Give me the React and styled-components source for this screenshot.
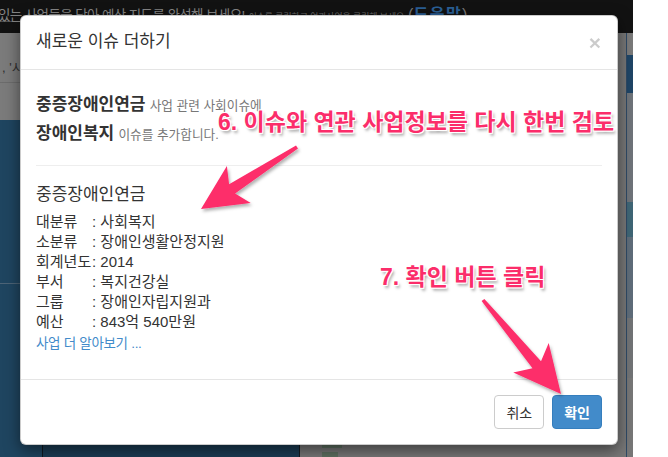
import React from 'react'
import styled, { createGlobalStyle } from 'styled-components'

const GlobalStyle = createGlobalStyle`
  html, body { margin: 0; padding: 0; background: #fff; }
  body { font-family: "Liberation Sans", "Noto Sans CJK KR", sans-serif; }
`

const detail = [
  ['대분류', '사회복지'],
  ['소분류', '장애인생활안정지원'],
  ['회계년도', '2014'],
  ['부서', '복지건강실'],
  ['그룹', '장애인자립지원과'],
  ['예산', '843억 540만원'],
]

// arrow polygon: tapered shaft + swept back head
function arrowPoints(tail, tip, headLen, sweep, headHalf, neckHalf, tailHalf) {
  const dx = tip[0] - tail[0]
  const dy = tip[1] - tail[1]
  const len = Math.hypot(dx, dy)
  const ux = dx / len
  const uy = dy / len
  const px = -uy
  const py = ux
  const neck = [tip[0] - ux * headLen, tip[1] - uy * headLen]
  const base = [tip[0] - ux * (headLen + sweep), tip[1] - uy * (headLen + sweep)]
  const pts = [
    [tail[0] + px * tailHalf, tail[1] + py * tailHalf],
    [neck[0] + px * neckHalf, neck[1] + py * neckHalf],
    [base[0] + px * headHalf, base[1] + py * headHalf],
    tip,
    [base[0] - px * headHalf, base[1] - py * headHalf],
    [neck[0] - px * neckHalf, neck[1] - py * neckHalf],
    [tail[0] - px * tailHalf, tail[1] - py * tailHalf],
  ]
  return pts.map(p => p[0].toFixed(1) + ',' + p[1].toFixed(1)).join(' ')
}

function App() {
  return (
    <>
      <GlobalStyle />
      <Page>
        <TopBar>
          <Lead>있는 사업들을 담아 예산 지도를 완성해 보세요!</Lead>
          <Hint>이슈를 클릭하고 연관사업을 클릭해 보세요</Hint>
          <Help>(<b>도움말</b>)</Help>
        </TopBar>
        <Main>
          <LeftCol>
            <LeftHead>
              <HeadRow>, '시민 참여', '복지'</HeadRow>
            </LeftHead>
            <LeftBody>
              <Sidebar>
                <SideBlock />
              </Sidebar>
            </LeftBody>
          </LeftCol>
          <RightCol>
            <RightContent>
              <Tag $w={20} />
              <Tag $w={16} />
            </RightContent>
            <Strip>
              <StripBlock $h={22} $bg="#7a7a7a" />
              <StripBlock $h={38} $bg="#1f4566" />
              <StripBlock $h={109} $bg="#6f747a" />
              <StripBlock $h={35} $bg="#3f6676" />
              <StripBlock $h={81} $bg="#5f6d7a" />
              <StripBlock $h={60} $bg="#727476" />
            </Strip>
          </RightCol>
        </Main>

        <Modal>
          <Header>
            <Title>새로운 이슈 더하기</Title>
            <Close>×</Close>
          </Header>
          <Body>
            <Intro>
              <Strong>중증장애인연금</Strong> <Small>사업 관련 사회이슈에</Small>
              <br />
              <Strong>장애인복지</Strong> <Small>이슈를 추가합니다.</Small>
            </Intro>
            <Rule />
            <SectionTitle>중증장애인연금</SectionTitle>
            {detail.map(([k, v]) => (
              <Row key={k}>
                <Label>{k}</Label>: {v}
              </Row>
            ))}
            <More href="#">사업 더 알아보기 ...</More>
          </Body>
          <Footer>
            <Button>취소</Button>
            <Button $primary>확인</Button>
          </Footer>
        </Modal>

        <Arrows width="633" height="457" viewBox="0 0 633 457">
          <defs>
            <filter id="sh" x="-20%" y="-20%" width="140%" height="140%">
              <feDropShadow dx="1.5" dy="2.5" stdDeviation="1.5" floodColor="#000" floodOpacity="0.3" />
            </filter>
          </defs>
          <polygon
            filter="url(#sh)"
            fill="#fd2d6b"
            points={arrowPoints([297, 147], [201, 209], 37, 8, 22, 5.5, 1.8)}
          />
          <polygon
            filter="url(#sh)"
            fill="#fd2d6b"
            points={arrowPoints([483, 300], [561, 394], 38, 9, 23, 5.5, 1.8)}
          />
        </Arrows>

        <Note $x={218} $y={107}>6. 이슈와 연관 사업정보를 다시 한번 검토</Note>
        <Note $x={380} $y={262}>7. 확인 버튼 클릭</Note>
      </Page>
    </>
  )
}

const Page = styled.div`
  position: relative;
  width: 633px;
  height: 457px;
  overflow: hidden;
  background: #787878;
  display: flex;
  flex-direction: column;
`

const TopBar = styled.div`
  height: 33px;
  flex: none;
  background: #121212;
  display: flex;
  align-items: baseline;
  white-space: nowrap;
  padding-top: 1px;
  box-sizing: border-box;
  margin-left: -2px;
`

const Lead = styled.span`
  font-size: 13.5px;
  letter-spacing: -0.6px;
  color: #858585;
  text-decoration: underline;
  text-decoration-color: #4a4a4a;
  line-height: 18px;
`

const Hint = styled.span`
  font-size: 8.8px;
  color: #6a6a6a;
  margin-left: 4px;
`

const Help = styled.span`
  font-size: 16px;
  color: #7a7a7a;
  margin-left: 4px;
  b { color: #2a5f95; letter-spacing: 1.5px; }
`

const Main = styled.div`
  flex: 1;
  display: flex;
`

const LeftCol = styled.div`
  width: 299px;
  border-right: 1px solid #151b20;
  display: flex;
  flex-direction: column;
`

const LeftHead = styled.div`
  height: 87px;
  background: #7b7b7b;
`

const HeadRow = styled.div`
  height: 50px;
  border-bottom: 1px solid #6c6c6c;
  box-sizing: border-box;
  padding: 24px 0 0 2px;
  font-size: 13px;
  color: #2e2e2e;
  white-space: nowrap;
`

const LeftBody = styled.div`
  flex: 1;
  background: #1b3c54;
  display: flex;
`

const Sidebar = styled.div`
  width: 42px;
  background: #1f4560;
  border-right: 1px solid #0e1820;
`

const SideBlock = styled.div`
  height: 163px;
  border-bottom: 1px solid #4d6477;
`

const RightCol = styled.div`
  flex: 1;
  background: #777;
  display: flex;
`

const RightContent = styled.div`
  flex: 1;
  display: flex;
  flex-direction: column;
  justify-content: flex-end;
  gap: 4px;
  padding: 0 0 0 22px;
`

const Tag = styled.div`
  width: ${p => p.$w}px;
  height: 5px;
  background: #5d6f60;
`

const Strip = styled.div`
  width: 6px;
  border-left: 1px solid #2f4a66;
`

const StripBlock = styled.div`
  height: ${p => p.$h}px;
  background: ${p => p.$bg};
`

const Modal = styled.div`
  position: absolute;
  left: 20px;
  top: 15px;
  width: 598px;
  box-sizing: border-box;
  background: #fff;
  border: 1px solid rgba(0, 0, 0, 0.2);
  border-radius: 6px;
  box-shadow: 0 5px 15px rgba(0, 0, 0, 0.5);
  color: #333;
`

const Header = styled.div`
  display: flex;
  align-items: center;
  justify-content: space-between;
  padding: 14px 15px 15px;
  border-bottom: 1px solid #e5e5e5;
`

const Title = styled.h4`
  margin: 0;
  font-size: 17px;
  font-weight: normal;
  line-height: 24px;
  color: #333;
`

const Close = styled.span`
  font-family: "Liberation Sans", sans-serif;
  font-size: 21px;
  font-weight: bold;
  line-height: 1;
  color: #000;
  opacity: 0.2;
  margin-right: 1px;
`

const Body = styled.div`
  padding: 15px 15px 25px;
  font-size: 15px;
`

const Intro = styled.p`
  margin: 6px 0 0;
  line-height: 28px;
`

const Strong = styled.b`
  font-size: 17px;
  color: #333;
`

const Small = styled.span`
  font-size: 12.7px;
  color: #777;
`

const Rule = styled.hr`
  margin: 16px 0 18px;
  border: 0;
  border-top: 1px solid #eee;
`

const SectionTitle = styled.div`
  font-size: 17px;
  line-height: 22px;
  margin-bottom: 6px;
`

const Row = styled.div`
  line-height: 20px;
  white-space: nowrap;
`

const Label = styled.span`
  display: inline-block;
  width: 56px;
`

const More = styled.a`
  display: block;
  margin-top: 2px;
  line-height: 20px;
  font-size: 13.5px;
  letter-spacing: -0.3px;
  color: #428bca;
  text-decoration: none;
`

const Footer = styled.div`
  display: flex;
  justify-content: flex-end;
  gap: 8px;
  padding: 15px;
  border-top: 1px solid #e5e5e5;
`

const Button = styled.button`
  height: 34px;
  padding: 0 11px;
  font-family: "Liberation Sans", "Noto Sans CJK KR", sans-serif;
  font-size: 14px;
  border-radius: 4px;
  border: 1px solid ${p => (p.$primary ? '#357ebd' : '#ccc')};
  background: ${p => (p.$primary ? '#428bca' : '#fff')};
  color: ${p => (p.$primary ? '#fff' : '#333')};
  font-weight: ${p => (p.$primary ? 'bold' : 'normal')};
`

const Arrows = styled.svg`
  position: absolute;
  left: 0;
  top: 0;
  pointer-events: none;
`

const Note = styled.div`
  position: absolute;
  left: ${p => p.$x}px;
  top: ${p => p.$y}px;
  font-size: 23px;
  line-height: 30px;
  font-weight: bold;
  white-space: nowrap;
  color: #fb2d6a;
  text-shadow: -1px -1px 0 #fff, 1px -1px 0 #fff, -1px 1px 0 #fff, 1px 1px 0 #fff,
    0 0 2px #fff, 2px 3px 3px rgba(0, 0, 0, 0.35);
`

export default App
